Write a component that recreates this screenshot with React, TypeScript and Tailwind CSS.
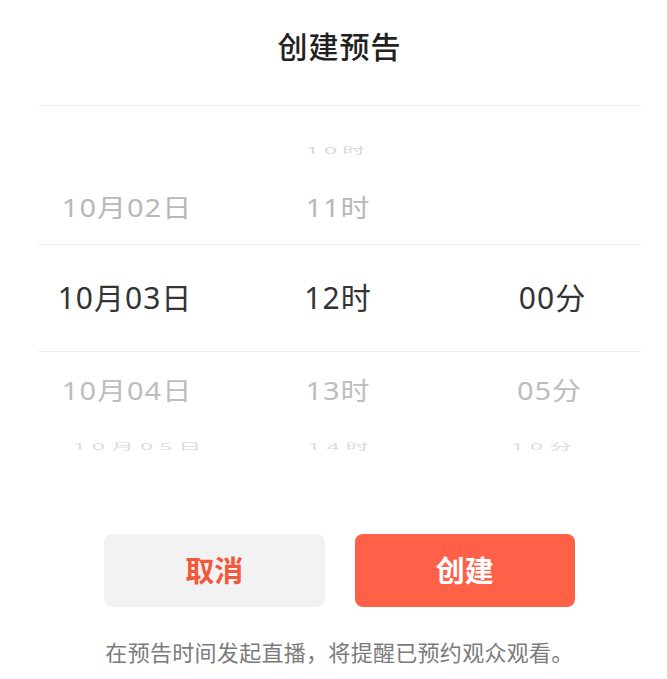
import React from "react";

const font = { fontFamily: '"Noto Sans", "Noto Sans CJK SC", sans-serif' };

type Cell = string | null;

function Row({
  cells,
  className,
  textClass,
  shifts,
}: {
  cells: Cell[];
  className: string;
  textClass: string;
  shifts?: string[];
}) {
  return (
    <div className={`grid grid-cols-[174px_252px_177px] items-center ${className}`}>
      {cells.map((c, i) => (
        <div key={i} className={`flex justify-center ${shifts ? shifts[i] : ""}`}>
          {c ? <span className={`whitespace-nowrap leading-none ${textClass}`}>{c}</span> : null}
        </div>
      ))}
    </div>
  );
}

export default function App() {
  return (
    <div className="w-[667px] h-[679px] bg-white overflow-hidden" style={font}>
      <div className="pl-[38px] pr-[26px] flex flex-col">
        <div className="h-[106px] flex items-center justify-center border-b border-[#efefef]">
          <span className="text-[30px] font-medium text-[#222] tracking-[1px] leading-none mt-[-12px]">
            创建预告
          </span>
        </div>

        <div className="pt-[24px] flex flex-col">
          <Row
            cells={[null, "10时", null]}
            className="h-[40px]"
            textClass="text-[23px] text-[#dadada] tracking-[5px] scale-y-[0.38] inline-block"
          />
          <Row
            cells={["10月02日", "11时", null]}
            className="h-[74px]"
            textClass="text-[29px] text-[#b8b8b8] tracking-[1px] scale-y-[0.86] inline-block"
            shifts={["translate-x-[2px]", "", ""]}
          />
          <Row
            cells={["10月03日", "12时", "00分"]}
            className="h-[108px] border-y border-[#efefef]"
            textClass="text-[30px] text-[#333] tracking-[1px]"
          />
          <Row
            cells={["10月04日", "13时", "05分"]}
            className="h-[76px]"
            textClass="text-[29px] text-[#bdbdbd] tracking-[1px] scale-y-[0.86] inline-block"
            shifts={["translate-x-[2px]", "", "translate-x-[-3px]"]}
          />
          <Row
            cells={["10月05日", "14时", "10分"]}
            className="h-[36px]"
            textClass="text-[23px] text-[#dcdcdc] tracking-[6px] scale-y-[0.38] inline-block"
            shifts={["translate-x-[15px]", "translate-x-[3px]", "translate-x-[-8px]"]}
          />
        </div>

        <div className="mt-[70px] px-[66px] flex gap-[30px]">
          <button className="flex-1 h-[73px] rounded-[8px] bg-[#f2f2f2] flex items-center justify-center">
            <span className="text-[29px] font-semibold text-[#f1593c] leading-none">取消</span>
          </button>
          <button className="flex-1 h-[73px] rounded-[8px] bg-[#fe6048] flex items-center justify-center">
            <span className="text-[29px] font-semibold text-white leading-none">创建</span>
          </button>
        </div>

        <div className="mt-[34px] flex justify-center">
          <span className="text-[22px] text-[#7b7b7b] leading-none tracking-[0.3px]">
            在预告时间发起直播，将提醒已预约观众观看。
          </span>
        </div>
      </div>
    </div>
  );
}
